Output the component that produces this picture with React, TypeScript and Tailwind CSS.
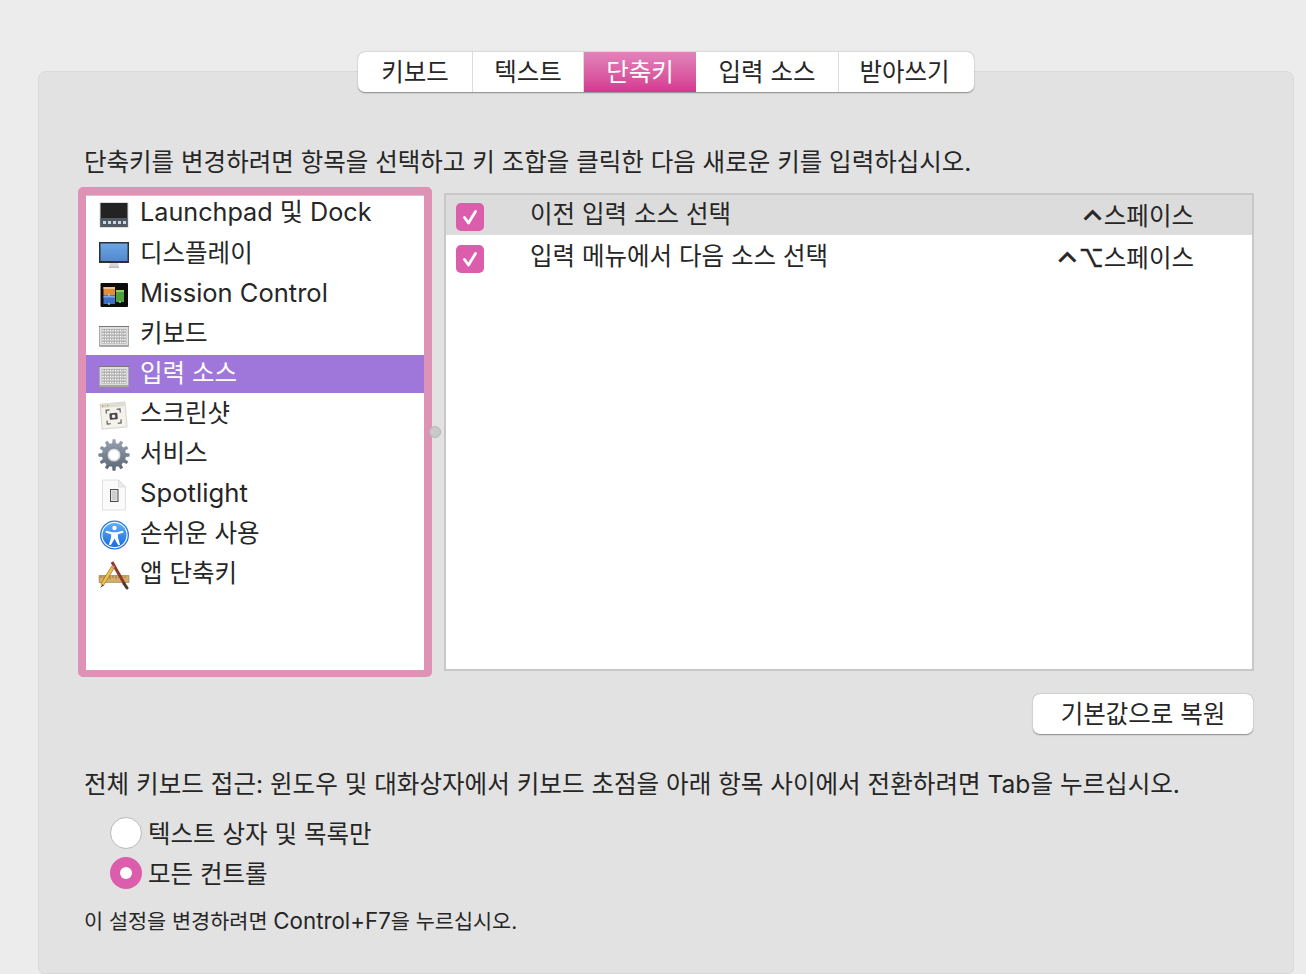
import type { ReactNode } from 'react';

const FONT = 'font-[Inter,"Noto_Sans_CJK_KR",sans-serif]';

const TABS = [
  { label: '키보드', width: 'w-[115px]' },
  { label: '텍스트', width: 'w-[111px]' },
  { label: '단축키', width: 'w-[112px]', active: true },
  { label: '입력 소스', width: 'w-[143px]' },
  { label: '받아쓰기', width: 'w-[135px] pr-1' },
];

function Launchpad() {
  return (
    <svg viewBox="0 0 32 32" className="w-8 h-8">
      <rect x="1.5" y="3" width="29" height="26" fill="#dcdcdc" />
      <rect x="2.5" y="4" width="27" height="24" fill="#232323" />
      <rect x="2.5" y="19" width="27" height="9" fill="#4f5a62" />
      {[5, 10, 15, 20, 25].map((x) => (
        <rect key={x} x={x} y="22" width="3" height="3" fill="#c9d6e2" />
      ))}
    </svg>
  );
}

function Display() {
  return (
    <svg viewBox="0 0 32 32" className="w-8 h-8">
      <defs>
        <linearGradient id="screen" x1="0" y1="0" x2="0" y2="1">
          <stop offset="0" stopColor="#6da6e4" />
          <stop offset="1" stopColor="#5189cc" />
        </linearGradient>
      </defs>
      <path d="M12 23h8l1 5h-10z" fill="#d8d8d8" />
      <rect x="11" y="27.5" width="10" height="1.5" fill="#bdbdbd" />
      <rect x="1" y="3" width="30" height="21" fill="#2c3136" />
      <rect x="2.5" y="4.5" width="27" height="17.5" fill="url(#screen)" />
    </svg>
  );
}

function MissionControl() {
  return (
    <svg viewBox="0 0 32 32" className="w-8 h-8">
      <rect x="2.5" y="4" width="27.5" height="24" rx="1" fill="#0c0c0c" />
      <rect x="5.5" y="8" width="11.5" height="8" fill="#e28d3c" />
      <rect x="5.5" y="8" width="11.5" height="2" fill="#f2c27c" />
      <rect x="5.5" y="16.5" width="11.5" height="8.5" fill="#3d70c6" />
      <rect x="5.5" y="16.5" width="11.5" height="2" fill="#7fa8e4" />
      <rect x="18" y="11" width="8" height="12" fill="#4fa336" />
      <rect x="18" y="11" width="8" height="2" fill="#8bd06a" />
      <circle cx="11" cy="16" r="1" fill="#7fd0f0" />
      <circle cx="11" cy="25" r="1" fill="#7fd0f0" />
      <circle cx="22" cy="23" r="1" fill="#7fd0f0" />
    </svg>
  );
}

function Keyboard() {
  const rows = [10.5, 13.5, 16.5, 19.5, 22.5];
  const cols = [4, 6.5, 9, 11.5, 14, 16.5, 19, 21.5, 24, 26];
  return (
    <svg viewBox="0 0 32 32" className="w-8 h-8">
      <path d="M1 7h30v19.5a1.5 1.5 0 0 1-1.5 1.5h-27A1.5 1.5 0 0 1 1 26.5z" fill="#777" />
      <rect x="1.5" y="8" width="29" height="19.5" fill="#dedede" />
      <rect x="1.5" y="26" width="29" height="1.5" fill="#a5a5a5" />
      {rows.map((y) =>
        cols.map((x) => <rect key={`${x}-${y}`} x={x} y={y} width="2" height="2.2" fill="#ffffff" stroke="#939393" strokeWidth="0.5" />),
      )}
    </svg>
  );
}

function Screenshot() {
  return (
    <svg viewBox="0 0 32 32" className="w-8 h-8">
      <g transform="rotate(-5 16 16)">
        <rect x="3" y="4" width="25" height="25" fill="#f5f2ec" stroke="#c9c6c0" strokeWidth="0.7" />
        <rect x="3" y="4" width="25" height="4" fill="#dfdcd6" />
        <circle cx="5.5" cy="6" r="0.8" fill="#e0675c" />
        <circle cx="8" cy="6" r="0.8" fill="#e5bd4f" />
        <circle cx="10.5" cy="6" r="0.8" fill="#70b85c" />
        <path d="M8.5 14v-3.5h3.5M19 10.5h3.5V14M22.5 21v3.5H19M12 24.5H8.5V21" fill="none" stroke="#555" strokeWidth="1.1" />
        <rect x="11.5" y="14" width="8" height="6.5" rx="1" fill="#4a4a4a" />
        <circle cx="15.5" cy="17.2" r="1.8" fill="#eee" />
      </g>
    </svg>
  );
}

function Gear() {
  const teeth = 12;
  let d = '';
  for (let i = 0; i < teeth; i++) {
    const a = (i / teeth) * Math.PI * 2;
    const step = Math.PI / teeth;
    const pts = [
      [a - step * 0.6, 12],
      [a - step * 0.35, 15.7],
      [a + step * 0.35, 15.7],
      [a + step * 0.6, 12],
    ];
    pts.forEach(([t, r], j) => {
      const x = (16 + Math.cos(t) * r).toFixed(2);
      const y = (16 + Math.sin(t) * r).toFixed(2);
      d += `${i === 0 && j === 0 ? 'M' : 'L'}${x} ${y}`;
    });
  }
  return (
    <svg viewBox="0 0 32 32" className="w-8 h-8">
      <defs>
        <linearGradient id="gear" x1="0" y1="0" x2="0" y2="1">
          <stop offset="0" stopColor="#99a4b4" />
          <stop offset="1" stopColor="#5a6473" />
        </linearGradient>
        <radialGradient id="hub">
          <stop offset="0.6" stopColor="#ffffff" />
          <stop offset="1" stopColor="#b4bcc6" />
        </radialGradient>
      </defs>
      <path d={`${d}Z`} fill="url(#gear)" />
      <circle cx="16" cy="16" r="7" fill="url(#hub)" />
      <circle cx="16" cy="16" r="7" fill="none" stroke="#6b7585" strokeWidth="0.7" />
    </svg>
  );
}

function SpotlightDoc() {
  return (
    <svg viewBox="0 0 32 32" className="w-8 h-8">
      <path d="M4.5 1h16l7 7v23h-23z" fill="#fafafa" stroke="#d9d9d9" strokeWidth="0.8" />
      <path d="M20.5 1v7h7z" fill="#ececec" stroke="#d9d9d9" strokeWidth="0.8" />
      <rect x="12.5" y="10.5" width="7.5" height="12" fill="#e4e4e4" stroke="#4c4c4c" />
      <rect x="14" y="12" width="4.5" height="9" fill="#cfcfcf" />
    </svg>
  );
}

function Accessibility() {
  return (
    <svg viewBox="0 0 32 32" className="w-8 h-8">
      <defs>
        <linearGradient id="acc" x1="0" y1="0" x2="0" y2="1">
          <stop offset="0" stopColor="#5cb0f5" />
          <stop offset="1" stopColor="#1a6be0" />
        </linearGradient>
      </defs>
      <circle cx="16.5" cy="16" r="14.5" fill="#2a79d8" />
      <circle cx="16.5" cy="16" r="13.2" fill="#f4f8fc" />
      <circle cx="16.5" cy="16" r="12" fill="url(#acc)" />
      <circle cx="16.5" cy="9" r="2.2" fill="#fff" />
      <path
        d="M8 11.8 14.5 13.2h4l6.5-1.4.5 1.7-5.6 1.7v3.3l2.2 7.2-1.9.6-3.7-6.7-3.7 6.7-1.9-.6 2.2-7.2v-3.3l-5.6-1.7z"
        fill="#fff"
      />
    </svg>
  );
}

function AppShortcuts() {
  return (
    <svg viewBox="0 0 32 32" className="w-8 h-8">
      <path d="M1 16.5h30v7H1z" fill="#d4ad6c" stroke="#8a6c3c" strokeWidth="0.5" />
      <path d="M3 16.5v2.5M6 16.5v3.5M9 16.5v2.5M12 16.5v3.5M15 16.5v2.5M18 16.5v3.5M21 16.5v2.5M24 16.5v3.5M27 16.5v2.5" stroke="#6f5630" strokeWidth="0.6" />
      <path d="M14 3 26.5 25" stroke="#8d3a2e" strokeWidth="3" />
      <path d="M26 24.5 29 29" stroke="#4a3a2c" strokeWidth="3" strokeLinecap="round" />
      <path d="M15 8 4 26" stroke="#8a6a1f" strokeWidth="3.6" />
      <path d="M15 8 4 26" stroke="#ecc24a" strokeWidth="2.6" />
      <path d="M4.5 25.2 2 29l3.6-2.6z" fill="#3a2a24" />
      <path d="M15.6 7 14.2 9.2" stroke="#e28a9a" strokeWidth="3" />
    </svg>
  );
}

const SOURCES: { label: string; icon: ReactNode; size: string; selected?: boolean }[] = [
  { label: 'Launchpad 및 Dock', icon: <Launchpad />, size: 'text-[25.2px]' },
  { label: '디스플레이', icon: <Display />, size: 'text-[24.5px]' },
  { label: 'Mission Control', icon: <MissionControl />, size: 'text-[25.5px]' },
  { label: '키보드', icon: <Keyboard />, size: 'text-[24.5px]' },
  { label: '입력 소스', icon: <Keyboard />, size: 'text-[24.5px]', selected: true },
  { label: '스크린샷', icon: <Screenshot />, size: 'text-[24.5px]' },
  { label: '서비스', icon: <Gear />, size: 'text-[24.5px]' },
  { label: 'Spotlight', icon: <SpotlightDoc />, size: 'text-[25.7px]' },
  { label: '손쉬운 사용', icon: <Accessibility />, size: 'text-[24.5px]' },
  { label: '앱 단축키', icon: <AppShortcuts />, size: 'text-[24.5px]' },
];

const SHORTCUTS = [
  {
    label: '이전 입력 소스 선택',
    option: false,
    box: 'bg-[#dcdcdc]',
    checkTop: 'mt-2',
    labelTop: 'mt-px',
    keysTop: 'mt-[3px]',
  },
  {
    label: '입력 메뉴에서 다음 소스 선택',
    option: true,
    box: '',
    checkTop: 'mt-[10px]',
    labelTop: 'mt-[3px]',
    keysTop: 'mt-[5px]',
  },
];

function Checkbox({ className }: { className: string }) {
  return (
    <span className={`flex items-center justify-center w-7 h-7 rounded-[5px] bg-[#db5dab] shrink-0 ${className}`}>
      <svg viewBox="0 0 28 28" className="w-7 h-7">
        <path d="M8.5 14.5 12.5 20 19.5 8.5" fill="none" stroke="#fff" strokeWidth="2.8" strokeLinecap="round" strokeLinejoin="round" />
      </svg>
    </span>
  );
}

export default function App() {
  return (
    <div className={`${FONT} w-full h-[974px] overflow-hidden bg-[#ececec] text-[#262626] pl-[38px] pt-[71px]`}>
      <div className="relative w-[1256px] h-[903px] rounded-t-[8px] rounded-b-[6px] border border-[#d9d9d9] bg-[#e2e2e2] pl-[45px]">
        <div className="absolute left-[319px] top-[-20px] flex h-10 rounded-[7px] bg-white shadow-[0_0.5px_1.5px_rgba(0,0,0,0.4)] overflow-hidden">
          {TABS.map((tab) => (
            <div
              key={tab.label}
              className={
                tab.active
                  ? `${tab.width} flex items-center justify-center text-[24.5px] text-white bg-gradient-to-b from-[#e084bb] to-[#d53690]`
                  : `${tab.width} flex items-center justify-center text-[24.5px] border-r border-[#dcdcdc] last:border-r-0`
              }
            >
              {tab.label}
            </div>
          ))}
        </div>

        <p className="h-[115px] pt-[72px] text-[24.5px] leading-[36px] whitespace-nowrap">
          단축키를 변경하려면 항목을 선택하고 키 조합을 클릭한 다음 새로운 키를 입력하십시오.
        </p>

        <div className="flex -ml-[6px] gap-3">
          <div className="w-[354px] h-[490px] rounded-[5px] border-[8px] border-b-[7px] border-[#dd92b6] bg-white shadow-[inset_0_1px_0_#c8c8c8]">
            <ul className="flex flex-col gap-[2px]">
              {SOURCES.map((item) => (
                <li
                  key={item.label}
                  className={`flex items-center h-[38px] pl-[12px] gap-[10px] whitespace-nowrap ${item.size} ${
                    item.selected ? 'bg-[#9f76da] text-white' : ''
                  }`}
                >
                  <span className="mt-[2px] shrink-0">{item.icon}</span>
                  <span className="-mt-[2px]">{item.label}</span>
                </li>
              ))}
            </ul>
          </div>

          <div className="mt-[6px] w-[810px] h-[478px] border-2 border-[#c8c8c8] bg-white">
            {SHORTCUTS.map((row) => (
              <div key={row.label} className={`flex items-start h-10 pl-[10px] text-[24.5px] leading-[36px] ${row.box}`}>
                <Checkbox className={row.checkTop} />
                <span className={`ml-[46px] flex-1 whitespace-nowrap ${row.labelTop}`}>{row.label}</span>
                <span className={`mr-[58px] whitespace-nowrap ${row.keysTop}`}>
                  <span className="text-[29px] leading-[0] align-[-6px] [-webkit-text-stroke:0.7px_#262626]">⌃</span>
                  {row.option && <span className="[-webkit-text-stroke:0.6px_#262626]">⌥</span>}
                  스페이스
                </span>
              </div>
            ))}
          </div>
        </div>

        <span className="absolute left-[390px] top-[354px] w-3 h-3 rounded-full bg-[#c9c9c9] border border-[#b5b5b5]" />

        <div className="flex justify-end pr-[40px] mt-[17px]">
          <button className="w-[220px] h-10 rounded-[7px] bg-white text-[24.5px] shadow-[0_0.5px_1.5px_rgba(0,0,0,0.4)]">
            기본값으로 복원
          </button>
        </div>

        <p className="mt-[32px] text-[24.57px] leading-9 whitespace-nowrap">
          전체 키보드 접근: 윈도우 및 대화상자에서 키보드 초점을 아래 항목 사이에서 전환하려면 Tab을 누르십시오.
        </p>

        <div className="mt-[15px] ml-[26px] flex flex-col gap-2">
          <label className="flex items-center gap-[6px] h-8 text-[24.5px]">
            <span className="w-8 h-8 rounded-full bg-white border border-[#b9b9b9]" />
            <span className="mt-[2px]">텍스트 상자 및 목록만</span>
          </label>
          <label className="flex items-center gap-[6px] h-8 text-[24.5px]">
            <span className="flex items-center justify-center w-8 h-8 rounded-full bg-[#db5dab]">
              <span className="w-3 h-3 rounded-full bg-white" />
            </span>
            <span className="mt-[2px]">모든 컨트롤</span>
          </label>
        </div>

        <p className="mt-[16px] text-[20.75px] leading-8 whitespace-nowrap">
          이 설정을 변경하려면 <span className="text-[22.3px]">Control+F7</span>을 누르십시오.
        </p>
      </div>
    </div>
  );
}
